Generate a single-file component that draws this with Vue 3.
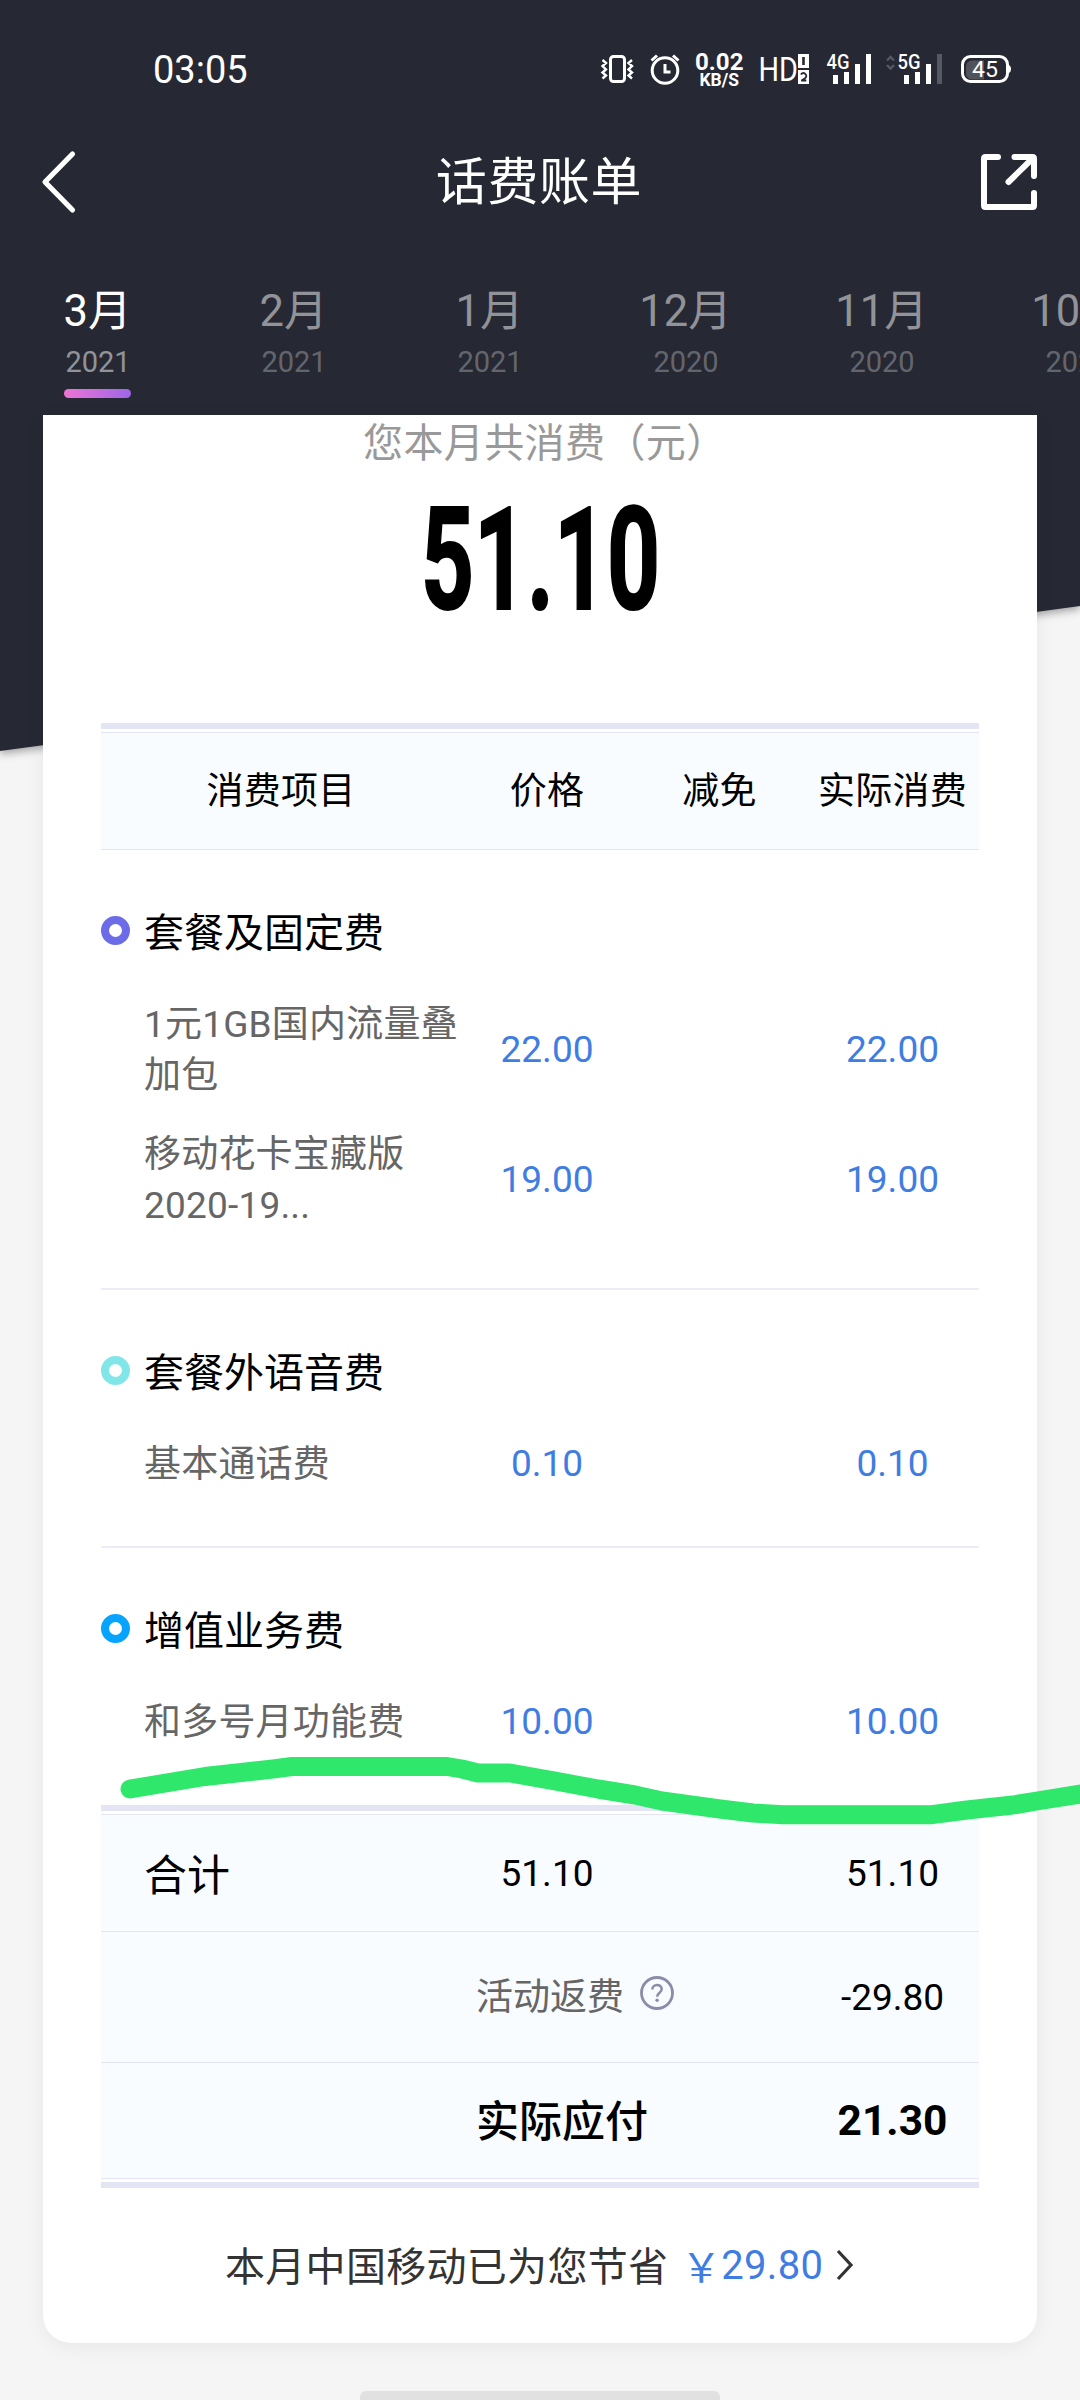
<script setup>
const months = [
  { m: '3月', y: '2021' },
  { m: '2月', y: '2021' },
  { m: '1月', y: '2021' },
  { m: '12月', y: '2020' },
  { m: '11月', y: '2020' },
  { m: '10月', y: '2020' },
]

const groups = [
  {
    name: '套餐及固定费',
    tone: 'violet',
    items: [
      { lines: ['1元1GB国内流量叠', '加包'], price: '22.00', actual: '22.00' },
      { lines: ['移动花卡宝藏版', '2020-19...'], price: '19.00', actual: '19.00' },
    ],
  },
  {
    name: '套餐外语音费',
    tone: 'teal',
    items: [{ lines: ['基本通话费'], price: '0.10', actual: '0.10' }],
  },
  {
    name: '增值业务费',
    tone: 'azure',
    items: [{ lines: ['和多号月功能费'], price: '10.00', actual: '10.00' }],
  },
]
</script>

<template>
  <div class="screen">
    <svg class="backdrop" width="1080" height="790" viewBox="0 0 1080 790">
      <polygon points="-20,-20 1100,-20 1100,603.4 -20,753.6" fill="#262833" />
    </svg>

    <header class="top">
      <div class="status">
        <span class="time">03:05</span>
        <svg class="status-icons" width="420" height="50" viewBox="595 45 420 50">
          <g fill="none" stroke="#fff" stroke-width="3">
            <rect x="610.5" y="56.5" width="14" height="25" rx="3" />
            <path d="M602.5 60l3.5 3-3.5 3 3.5 3.5-3.5 3 3.5 3-3.5 3M632 60l-3.500 3 3.500 3-3.500 3.500 3.500 3-3.500 3 3.500 3" stroke-width="2.400" />
            <circle cx="665" cy="70.500" r="12.800" />
            <path d="M665 64v8h5.500M651.500 60.500l5.500-5M678.500 60.500l-5.500-5" />
          </g>
          <g fill="#fff" font-family="Roboto, sans-serif">
            <text x="695" y="69.500" font-size="24.500" font-weight="700" textLength="48.500" lengthAdjust="spacingAndGlyphs">0.02</text>
            <text x="699.500" y="86" font-size="17.500" font-weight="700" textLength="39.500" lengthAdjust="spacingAndGlyphs">KB/S</text>
            <text x="758.500" y="81" font-size="33.500" textLength="39.500" lengthAdjust="spacingAndGlyphs">HD</text>
            <rect x="798" y="54" width="11" height="14" />
            <rect x="798" y="70" width="11" height="14" />
            <text x="826.500" y="69" font-size="20" font-weight="500" textLength="23" lengthAdjust="spacingAndGlyphs">4G</text>
            <text x="897.500" y="69" font-size="20" font-weight="500" textLength="23" lengthAdjust="spacingAndGlyphs">5G</text>
            <text x="972" y="77" font-size="22.500" textLength="26" lengthAdjust="spacingAndGlyphs">45</text>
          </g>
          <path d="M803.500 57v8" fill="none" stroke="#262833" stroke-width="2.600" />
          <path d="M800.800 74.500q2.700-3 5 0t-4.500 6h5" fill="none" stroke="#262833" stroke-width="1.800" />
          <g stroke="#fff" stroke-width="5" stroke-linecap="butt">
            <path d="M835.500 75v9M846.500 72v12M857.500 64v20M868.500 54v30" />
            <path d="M906.500 75v9M917.500 72v12M928.500 64v20" />
            <path d="M939.500 54v30" stroke="#565862" />
          </g>
          <path d="M887 60.500l3.500-3.500 3.500 3.500M887 65l3.500 3.500 3.500-3.500" fill="none" stroke="#565862" stroke-width="2.400" />
          <path d="M972 60.500h12v19h-12a6 6 0 0 1-6-6v-7a6 6 0 0 1 6-6z" fill="#fff" opacity=".2" />
          <rect x="962.500" y="56.500" width="45" height="25" rx="8" fill="none" stroke="#fff" stroke-width="3" />
          <path d="M1008 64.500q3 1 3 4.500t-3 4.500z" fill="#fff" />
        </svg>
      </div>

      <div class="nav">
        <svg width="40" height="70" viewBox="38 147 40 70">
          <path d="M72.500 154L45 182l27.500 28" fill="none" stroke="#fff" stroke-width="5.200" stroke-linecap="round" stroke-linejoin="round" />
        </svg>
        <h1>话费账单</h1>
        <svg width="60" height="60" viewBox="979 152 60 60">
          <path d="M998 157H985.500Q984 157 984 158.500V205.500Q984 207 985.500 207H1032.500Q1034 207 1034 205.500V193M1014.500 157H1032.500Q1034 157 1034 158.500V176M1033 158L1008.500 182" fill="none" stroke="#fff" stroke-width="6" stroke-linecap="round" />
        </svg>
      </div>

      <nav class="months">
        <div v-for="(t, i) in months" :key="t.m" class="month" :class="{ active: i === 0 }">
          <span class="m">{{ t.m }}</span>
          <span class="y">{{ t.y }}</span>
          <i class="underline"></i>
        </div>
      </nav>
    </header>

    <main class="card">
      <p class="caption">您本月共消费（元）</p>
      <svg class="total" width="240" height="112" viewBox="420 501 240 112">
        <text x="421" y="608.500" textLength="239" lengthAdjust="spacingAndGlyphs" font-family="Roboto, sans-serif" font-weight="700" font-size="142" stroke="#000" stroke-width="2">51.10</text>
      </svg>

      <div class="table">
        <div class="bar"></div>
        <div class="row head">
          <span>消费项目</span><span>价格</span><span>减免</span><span>实际消费</span>
        </div>

        <section v-for="g in groups" :key="g.name" class="group">
          <h2><i class="dot" :class="g.tone"></i><span>{{ g.name }}</span></h2>
          <div v-for="it in g.items" :key="it.lines[0]" class="row item">
            <span class="label"><span v-for="l in it.lines" :key="l">{{ l }}</span></span>
            <span class="num">{{ it.price }}</span>
            <span></span>
            <span class="num">{{ it.actual }}</span>
          </div>
        </section>

        <div class="bar"></div>
        <div class="row sum">
          <span class="sum-name">合计</span><span>51.10</span><span></span><span>51.10</span>
        </div>
        <div class="row refund">
          <span></span>
          <span class="wide">活动返费
            <svg width="36" height="36" viewBox="0 0 36 36">
              <circle cx="18" cy="18" r="15.500" fill="none" stroke="#8c8ca8" stroke-width="2.800" />
              <path d="M13.300 14.600c0-6 9.400-6 9.400-.4 0 3.400-4.600 3.700-4.600 7.600" fill="none" stroke="#8c8ca8" stroke-width="2.500" />
              <circle cx="18.100" cy="25.200" r="1.700" fill="#8c8ca8" />
            </svg>
          </span>
          <span>-29.80</span>
        </div>
        <div class="row due">
          <span></span><span class="wide">实际应付</span><span class="due-num">21.30</span>
        </div>
        <div class="bar end"></div>
      </div>

      <p class="saved">
        <span class="saved-text">本月中国移动已为您节省</span>
        <span class="yen">￥</span><span class="amount">29.80</span>
        <svg width="22" height="34" viewBox="0 0 22 34">
          <path d="M4 3l13 14L4 31" fill="none" stroke="#333" stroke-width="3.200" />
        </svg>
      </p>
    </main>

    <svg class="marker" width="1080" height="80" viewBox="0 1750 1080 80">
      <path d="M130 1789L205 1776.500 273 1769 292 1766.500H447L462 1769 478 1773H510L555 1781 598 1789 635 1795 662 1801 720 1809 753 1813 783 1814.700H932L967 1810 1013 1805 1037 1801 1090 1792.500" fill="none" stroke="#2fe76a" stroke-width="19" stroke-linecap="round" stroke-linejoin="round" />
    </svg>
    <div class="home"></div>
  </div>
</template>

<style>
body {
  margin: 0;
  background: #f5f5f5;
}
</style>

<style scoped>
.screen {
  position: relative;
  width: 1080px;
  height: 2400px;
  overflow: hidden;
  background: #f5f5f5;
  font-family: Roboto, 'Noto Sans CJK SC', sans-serif;
  color: #000;
}
h1,
h2,
p {
  margin: 0;
  font-weight: 400;
}
svg {
  display: block;
  flex: none;
}
.backdrop {
  position: absolute;
  top: 0;
  left: 0;
  filter: drop-shadow(0 3px 4px rgba(0, 0, 0, 0.35));
}
.top {
  position: relative;
  height: 415px;
  color: #fff;
}
.status {
  display: flex;
  justify-content: space-between;
  height: 95px;
  padding: 45px 65px 0 153px;
  box-sizing: border-box;
}
.time {
  font-size: 38px;
  line-height: 50px;
}
.nav {
  display: flex;
  align-items: center;
  justify-content: space-between;
  height: 174px;
  padding: 0 41px 0 38px;
}
.nav h1 {
  font-size: 51px;
  line-height: 74px;
  letter-spacing: 0.6px;
  padding: 2px 0 0 21px;
}
.months {
  display: flex;
  height: 146px;
  overflow: hidden;
}
.month {
  flex: 0 0 196px;
  display: flex;
  flex-direction: column;
  align-items: center;
  color: rgba(255, 255, 255, 0.5);
}
.m {
  font-size: 43.5px;
  line-height: 64px;
  margin: 11px 1px 0 0;
}
.y {
  font-size: 29px;
  line-height: 34px;
  margin-top: 1px;
  color: rgba(255, 255, 255, 0.3);
}
.active .m {
  color: #fff;
}
.active .y {
  color: rgba(255, 255, 255, 0.5);
}
.underline {
  width: 67px;
  height: 9px;
  border-radius: 5px;
  margin: 10px 1px 0 0;
}
.active .underline {
  background: linear-gradient(90deg, #ee74d4, #9d66e8);
}
.card {
  position: relative;
  width: 994px;
  height: 1928px;
  box-sizing: border-box;
  margin: 0 43px;
  padding: 0 58px;
  background: #fff;
  border-radius: 0 0 28px 28px;
  box-shadow: 0 4px 20px rgba(0, 0, 0, 0.06);
}
.caption {
  box-sizing: border-box;
  padding: 1px 0 0 262px;
  font-size: 40px;
  letter-spacing: 0.4px;
  line-height: 56px;
  height: 86px;
  color: #999;
}
.total {
  margin: 0 auto;
  overflow: visible;
}
.table {
  margin-top: 110px;
}
.bar {
  height: 6px;
  margin-bottom: 3px;
  background: #e3e5f5;
}
.bar.end {
  margin: 3px 0 0;
}
.row {
  display: grid;
  grid-template-columns: 360px 172px 173px 173px;
  align-items: center;
  text-align: center;
  font-size: 37px;
}
.head {
  height: 118px;
  box-sizing: border-box;
  padding-bottom: 6px;
  border-top: 1px solid #e3e5f5;
  border-bottom: 1px solid #e3e5f5;
  background: #f8fcff;
  letter-spacing: 0.3px;
}
.group {
  padding: 50px 0 57px;
  border-bottom: 2px solid #ececf6;
}
.group:first-of-type {
  padding-bottom: 58px;
}
.group:last-of-type {
  border-bottom: 0;
  padding-bottom: 58px;
}
h2 {
  display: flex;
  align-items: center;
  height: 60px;
  margin-bottom: 38px;
  font-size: 40px;
}
h2 span {
  margin-bottom: 1px;
}
.dot {
  width: 29px;
  height: 29px;
  box-sizing: border-box;
  border: 8.500px solid;
  border-radius: 50%;
  margin-right: 14px;
}
.violet {
  border-color: #6c6ce8;
}
.teal {
  border-color: #80e6e8;
}
.azure {
  border-color: #06a3ff;
}
.item + .item {
  margin-top: 28px;
}
.label {
  display: flex;
  flex-direction: column;
  padding-left: 43px;
  text-align: left;
  color: #666;
  white-space: nowrap;
}
.label span {
  height: 51px;
  line-height: 53px;
  letter-spacing: 0.2px;
}
.num {
  color: #3f7de3;
}
.sum,
.refund,
.due {
  box-sizing: border-box;
  background: #f8fcff;
  border-top: 1px solid #e3e5f5;
}
.sum {
  height: 117px;
}
.sum-name {
  padding: 0 0 2px 43px;
  text-align: left;
  font-size: 43px;
}
.refund,
.due {
  grid-template-columns: 375px 330px 173px;
}
.refund {
  height: 131px;
}
.wide {
  display: flex;
  align-items: center;
  padding-bottom: 6px;
  color: #666;
}
.wide svg {
  margin: -3px 0 0 15px;
}
.due {
  height: 117px;
  border-bottom: 1px solid #e3e5f5;
}
.due .wide {
  color: #000;
  font-size: 43px;
  font-weight: 500;
}
.due-num {
  font-size: 42.5px;
  font-weight: 700;
}
.saved {
  display: flex;
  align-items: center;
  margin-top: 46px;
  padding-left: 124px;
  height: 62px;
  font-size: 40px;
  color: #333;
}
.saved-text {
  letter-spacing: 0.3px;
  padding-bottom: 2px;
}
.yen,
.amount {
  color: #3f7de3;
}
.yen {
  margin-left: 13px;
  width: 40px;
}
.amount {
  letter-spacing: 0.3px;
}
.saved svg {
  margin-left: 11px;
}
.marker {
  position: absolute;
  left: 0;
  top: 1750px;
}
.home {
  position: absolute;
  left: 360px;
  top: 2391px;
  width: 360px;
  height: 14px;
  border-radius: 6px;
  background: #e1e1e1;
}
</style>
